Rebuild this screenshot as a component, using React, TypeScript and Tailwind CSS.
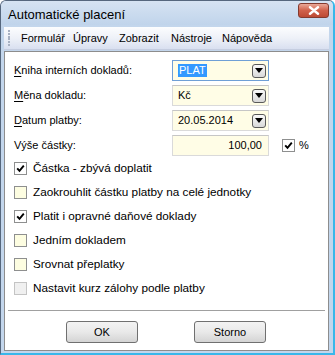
import React from "react";

const Arrow = () => (
  <div className="w-[14px] h-[14px] rounded-[3px] border border-[#5a5a5a] bg-gradient-to-b from-[#fafafa] to-[#d8d8d8] flex items-center justify-center">
    <svg width="8" height="5" viewBox="0 0 8 5"><path d="M0 0 L8 0 L4 5 Z" fill="#000" /></svg>
  </div>
);

const Check = ({ checked, disabled }: { checked?: boolean; disabled?: boolean }) => (
  <div
    className={
      "w-[13px] h-[13px] border flex items-center justify-center " +
      (disabled
        ? "border-[#c4c4c4] bg-[#f0f0f0]"
        : checked
        ? "border-[#8e8f8f] bg-white"
        : "border-[#8e8f8f] bg-[#fdfde1]")
    }
  >
    {checked && (
      <svg width="9" height="9" viewBox="0 0 9 9">
        <path d="M1.2 4.3 L3.5 6.8 L7.8 1.6" stroke="#000" strokeWidth="1.9" fill="none" />
      </svg>
    )}
  </div>
);

const U = ({ c }: { c: string }) => <span className="underline underline-offset-2">{c}</span>;

const sans = { fontFamily: '"Liberation Sans", Arial, sans-serif' };

export default function App() {
  const rows: { label: string; checked?: boolean; disabled?: boolean }[] = [
    { label: "Částka - zbývá doplatit", checked: true },
    { label: "Zaokrouhlit částku platby na celé jednotky" },
    { label: "Platit i opravné daňové doklady", checked: true },
    { label: "Jedním dokladem" },
    { label: "Srovnat přeplatky" },
    { label: "Nastavit kurz zálohy podle platby", disabled: true },
  ];
  const menu: [string, string][] = [
    ["Formulář", "w-[52px]"],
    ["Úpravy", "w-[46px]"],
    ["Zobrazit", "w-[52px]"],
    ["Nástroje", "w-[51px]"],
    ["Nápověda", "w-[55px]"],
  ];
  return (
    <div style={sans} className="w-[335px] h-[355px] bg-[#c3d6ec] border-l border-t border-[#56677d] border-r-2 border-b-2 border-r-[#39b7ea] border-b-[#39b7ea] rounded-tl-[6px] rounded-tr-[6px] flex flex-col text-[11px] text-black overflow-hidden">
      <div className="h-[24px] shrink-0 flex items-start justify-between pl-[7px] pr-[4px] bg-gradient-to-b from-[#d6e3f2] to-[#c0d4eb]">
        <span className="text-[13px] leading-[13px] mt-[7px] text-black">Automatické placení</span>
        <div className="w-[31px] h-[15px] mt-[2px] rounded-[3px] border border-[#843a2e] bg-gradient-to-b from-[#e9a898] via-[#d0604a] to-[#bd4a34] flex items-center justify-center">
          <svg width="12" height="9" viewBox="0 0 12 9">
            <path d="M2 1.2 L10 7.8 M10 1.2 L2 7.8" stroke="#fff" strokeWidth="2.4" strokeLinecap="round" />
          </svg>
        </div>
      </div>
      <div className="flex-1 flex flex-col pl-[3px] pr-[4px]">
        <div className="h-[23px] mt-[2px] shrink-0 flex items-center bg-gradient-to-b from-[#fcfdfe] via-[#eef1f8] to-[#d9e0f0] border-b border-[#c5cde0]">
          <div className="w-[3px] h-[18px] ml-[4px] mr-[10px] flex flex-col justify-between py-[1px]">
            {[0, 1, 2, 3, 4, 5].map((i) => (
              <div key={i} className="w-[2px] h-[2px] bg-[#a8b1c2]" />
            ))}
          </div>
          <div className="flex text-[11px]">
            {menu.map(([t, w]) => (
              <span key={t} className={w}>{t}</span>
            ))}
          </div>
        </div>
        <div className="h-[300px] mt-[1px] shrink-0 bg-white border border-[#8d8d8d] flex flex-col">
          <div className="pl-[9px] pt-[8px] flex flex-col gap-[4px]">
            <div className="flex items-center h-[21px]">
              <span className="w-[158px]"><U c="K" />niha interních dokladů:</span>
              <div className="w-[97px] h-[21px] bg-[#fffde6] border border-[#6f9fd6] flex items-center justify-between pl-[5px] pr-[2px]">
                <span className="bg-[#3399ff] text-white px-[1px] leading-[13px]">PLAT</span>
                <Arrow />
              </div>
            </div>
            <div className="flex items-center h-[21px]">
              <span className="w-[158px]"><U c="M" />ěna dokladu:</span>
              <div className="w-[97px] h-[21px] bg-[#fffde6] border border-[#dadada] border-t-[#c6c6c6] flex items-center justify-between pl-[5px] pr-[2px]">
                <span>Kč</span>
                <Arrow />
              </div>
            </div>
            <div className="flex items-center h-[21px]">
              <span className="w-[158px]"><U c="D" />atum platby:</span>
              <div className="w-[97px] h-[21px] bg-[#fffde6] border border-[#dadada] border-t-[#c6c6c6] flex items-center justify-between pl-[5px] pr-[2px]">
                <span>20.05.2014</span>
                <Arrow />
              </div>
            </div>
            <div className="flex items-center h-[21px]">
              <span className="w-[158px]">Výše částky:</span>
              <div className="w-[97px] h-[21px] bg-[#fffde6] border border-[#dadada] border-t-[#c6c6c6] flex items-center justify-end pr-[6px]">
                <span>100,00</span>
              </div>
              <div className="ml-[13px] flex items-center gap-[4px]">
                <Check checked />
                <span>%</span>
              </div>
            </div>
          </div>
          <div className="pl-[9px] flex flex-col text-[11.75px]">
            {rows.map((r) => (
              <div key={r.label} className="h-[24px] flex items-center gap-[6px]">
                <Check checked={r.checked} disabled={r.disabled} />
                <span>{r.label}</span>
              </div>
            ))}
          </div>
          <div className="mx-[3px] mt-[10px] border-t border-[#a0a0a0]" />
          <div className="flex justify-center gap-[56px] pt-[10px] pr-[1px]">
            {["OK", "Storno"].map((t) => (
              <div key={t} className="w-[72px] h-[22px] rounded-[3px] border border-[#707070] bg-gradient-to-b from-[#f3f3f3] via-[#e9e9e9] to-[#d4d4d4] flex items-center justify-center">
                {t}
              </div>
            ))}
          </div>
        </div>
      </div>
    </div>
  );
}
